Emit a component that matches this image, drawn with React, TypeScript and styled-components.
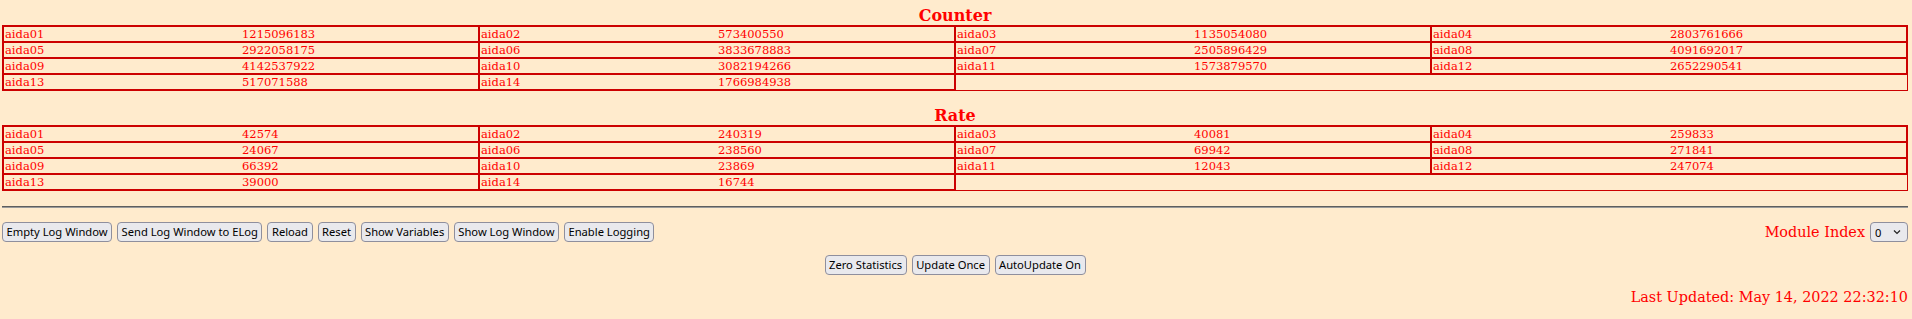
import React, { useState } from "react";
import styled, { createGlobalStyle } from "styled-components";

const GlobalStyle = createGlobalStyle`
  body {
    margin: 0;
    background: #ffebcd;
    font-family: "DejaVu Serif", serif;
    color: #ff0000;
  }
`;

const Page = styled.div`
  padding: 0 4px 0 2px;
`;

const Section = styled.section`
  padding-top: 7px;
  margin-bottom: 9px;
`;

const Title = styled.h3`
  margin: 0;
  font-size: 16px;
  line-height: 18px;
  font-weight: bold;
  text-align: center;
  color: #ff0000;
`;

const Table = styled.table`
  width: 100%;
  border-collapse: collapse;
  table-layout: fixed;
`;

const Cell = styled.td<{ $empty?: boolean }>`
  border: ${(p) => (p.$empty ? "1px" : "2px")} solid #cc0000;
  padding: 0;
  height: 14px;
`;

const Pair = styled.div`
  display: flex;
  font-size: 11.5px;
  line-height: 14px;
  color: #ff0000;
  white-space: nowrap;
`;

const PairText = styled.span`
  flex: 1 1 0;
  padding-left: 1px;
`;

const Rule = styled.hr`
  margin: 15px 0 0;
  height: 0;
  border: 0;
  border-top: 1px solid #5e5e5e;
  border-bottom: 1px solid #9a9a9a;
`;

const ControlRow = styled.div`
  display: flex;
  justify-content: space-between;
  align-items: center;
  margin-top: 14px;
`;

const ButtonGroup = styled.div<{ $center?: boolean }>`
  display: flex;
  gap: 5px;
  justify-content: ${(p) => (p.$center ? "center" : "flex-start")};
  margin-top: ${(p) => (p.$center ? "13px" : "0")};
`;

const Button = styled.button`
  height: 20px;
  padding: 0 3.5px;
  border: 1px solid #8f8f9d;
  border-radius: 4px;
  background: #e9e9ed;
  color: #000;
  font-family: "Noto Sans", sans-serif;
  font-size: 11.2px;
  line-height: 18px;
  cursor: pointer;
`;

const IndexPicker = styled.label`
  display: flex;
  align-items: center;
  gap: 5px;
  font-size: 14.4px;
  line-height: 17px;
  color: #ff0000;
`;

const SelectWrap = styled.span`
  position: relative;
  display: inline-flex;
`;

const Select = styled.select`
  appearance: none;
  width: 38px;
  height: 20px;
  padding: 0 0 0 4px;
  border: 1px solid #8f8f9d;
  border-radius: 4px;
  background: #e9e9ed;
  color: #000;
  font-family: "Noto Sans", sans-serif;
  font-size: 11.2px;
`;

const Chevron = styled.svg`
  position: absolute;
  right: 7px;
  top: 7px;
  pointer-events: none;
`;

const Footer = styled.div`
  margin-top: 14px;
  text-align: right;
  font-size: 14.4px;
  line-height: 17px;
  color: #ff0000;
`;

const COUNTERS = [
  1215096183, 573400550, 1135054080, 2803761666, 2922058175, 3833678883,
  2505896429, 4091692017, 4142537922, 3082194266, 1573879570, 2652290541,
  517071588, 1766984938,
];

const RATES = [
  42574, 240319, 40081, 259833, 24067, 238560, 69942, 271841, 66392, 23869,
  12043, 247074, 39000, 16744,
];

const COLS = 4;

const label = (i: number) => `aida${String(i + 1).padStart(2, "0")}`;

const DataTable = ({ values }: { values: number[] }) => {
  const rows: number[][] = [];
  for (let i = 0; i < values.length; i += COLS) rows.push(values.slice(i, i + COLS));

  return (
    <Table>
      <tbody>
        {rows.map((row, r) => (
          <tr key={r}>
            {row.map((v, c) => (
              <Cell key={c}>
                <Pair>
                  <PairText>{label(r * COLS + c)}</PairText>
                  <PairText>{v}</PairText>
                </Pair>
              </Cell>
            ))}
            {row.length < COLS && <Cell $empty colSpan={COLS - row.length} />}
          </tr>
        ))}
      </tbody>
    </Table>
  );
};

const LEFT_BUTTONS = [
  "Empty Log Window",
  "Send Log Window to ELog",
  "Reload",
  "Reset",
  "Show Variables",
  "Show Log Window",
  "Enable Logging",
];

const App = () => {
  const [moduleIndex, setModuleIndex] = useState("0");
  const [autoUpdate, setAutoUpdate] = useState(true);

  return (
    <Page>
      <GlobalStyle />

      <Section>
        <Title>Counter</Title>
        <DataTable values={COUNTERS} />
      </Section>

      <Section>
        <Title>Rate</Title>
        <DataTable values={RATES} />
      </Section>

      <Rule />

      <ControlRow>
        <ButtonGroup>
          {LEFT_BUTTONS.map((b) => (
            <Button key={b}>{b}</Button>
          ))}
        </ButtonGroup>
        <IndexPicker>
          Module Index
          <SelectWrap>
            <Select value={moduleIndex} onChange={(e) => setModuleIndex(e.target.value)}>
              {[0, 1, 2, 3].map((n) => (
                <option key={n} value={n}>
                  {n}
                </option>
              ))}
            </Select>
            <Chevron width="8" height="6" viewBox="0 0 8 6">
              <path d="M1 1.5 L4 4.5 L7 1.5" fill="none" stroke="#222" strokeWidth="1.2" />
            </Chevron>
          </SelectWrap>
        </IndexPicker>
      </ControlRow>

      <ButtonGroup $center>
        <Button>Zero Statistics</Button>
        <Button>Update Once</Button>
        <Button onClick={() => setAutoUpdate(!autoUpdate)}>
          {autoUpdate ? "AutoUpdate On" : "AutoUpdate Off"}
        </Button>
      </ButtonGroup>

      <Footer>Last Updated: May 14, 2022 22:32:10</Footer>
    </Page>
  );
};

export default App;
